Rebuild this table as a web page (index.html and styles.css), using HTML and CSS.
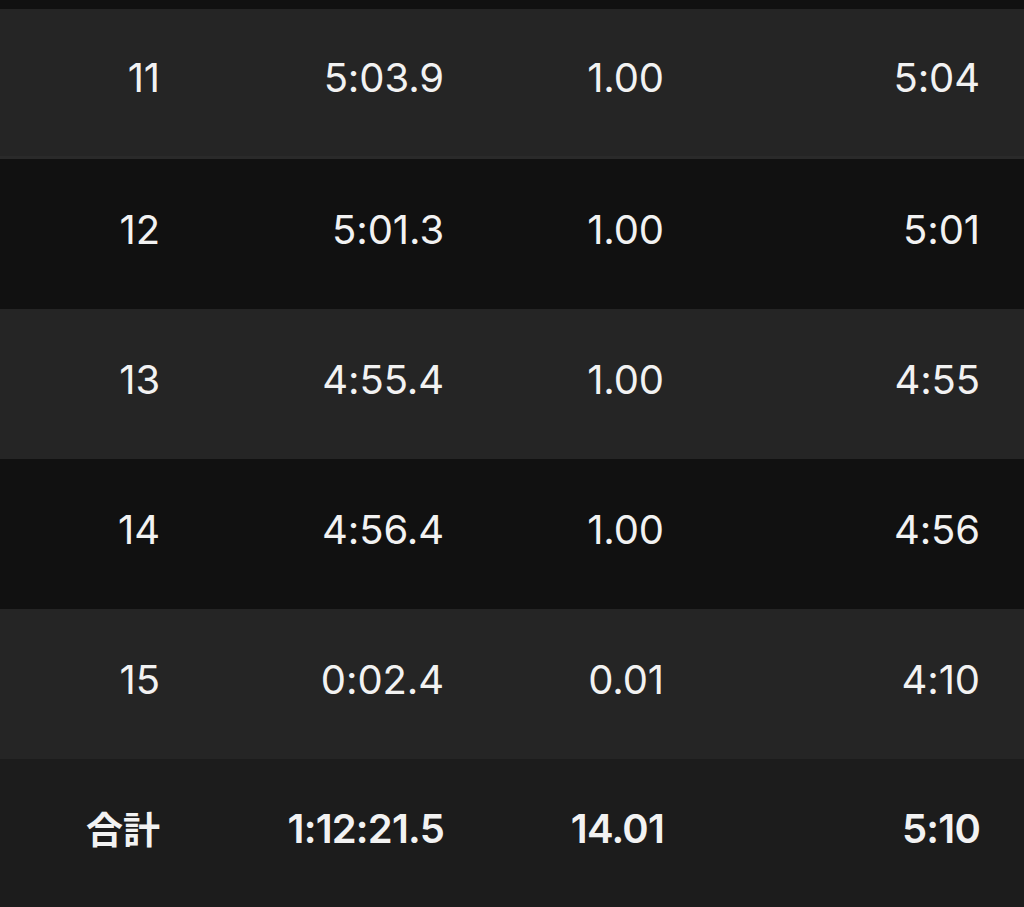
FILE: index.html
```html
<!DOCTYPE html>
<html lang="ja">
<head>
<meta charset="utf-8">
<link rel="stylesheet" href="styles.css">
</head>
<body>
<div class="table">
  <div class="row light first"><span>11</span><span>5:03.9</span><span>1.00</span><span>5:04</span></div>
  <div class="row dark"><span>12</span><span>5:01.3</span><span>1.00</span><span>5:01</span></div>
  <div class="row light"><span>13</span><span>4:55.4</span><span>1.00</span><span>4:55</span></div>
  <div class="row dark"><span>14</span><span>4:56.4</span><span>1.00</span><span>4:56</span></div>
  <div class="row light"><span>15</span><span>0:02.4</span><span>0.01</span><span>4:10</span></div>
  <div class="row total"><span class="jp">合計</span><span>1:12:21.5</span><span>14.01</span><span>5:10</span></div>
</div>
</body>
</html>
```
FILE: styles.css
```css
html, body {
  margin: 0;
  padding: 0;
  background: #111111;
}
body {
  font-family: Inter, "Noto Sans", "Noto Sans CJK JP", sans-serif;
  color: #f2f2f2;
}
.table {
  padding-top: 9px;
}
.row {
  display: grid;
  grid-template-columns: 160px 284px 220px 316px;
  height: 150px;
  box-sizing: border-box;
  align-items: center;
  font-size: 40px;
  padding-bottom: 10px;
}
.row span {
  text-align: right;
  letter-spacing: -0.1px;
}
.light { background: #252525; }
.first { border-bottom: 3px solid #2a2a2a; }
.dark { background: #111111; }
.total {
  background: #1c1c1c;
  font-weight: 600;
  height: 148px;
}
.total span {
  letter-spacing: -0.8px;
}
.total .jp {
  font-family: "Noto Sans CJK JP", sans-serif;
  font-weight: 700;
  font-size: 37px;
  letter-spacing: 0;
}
```
